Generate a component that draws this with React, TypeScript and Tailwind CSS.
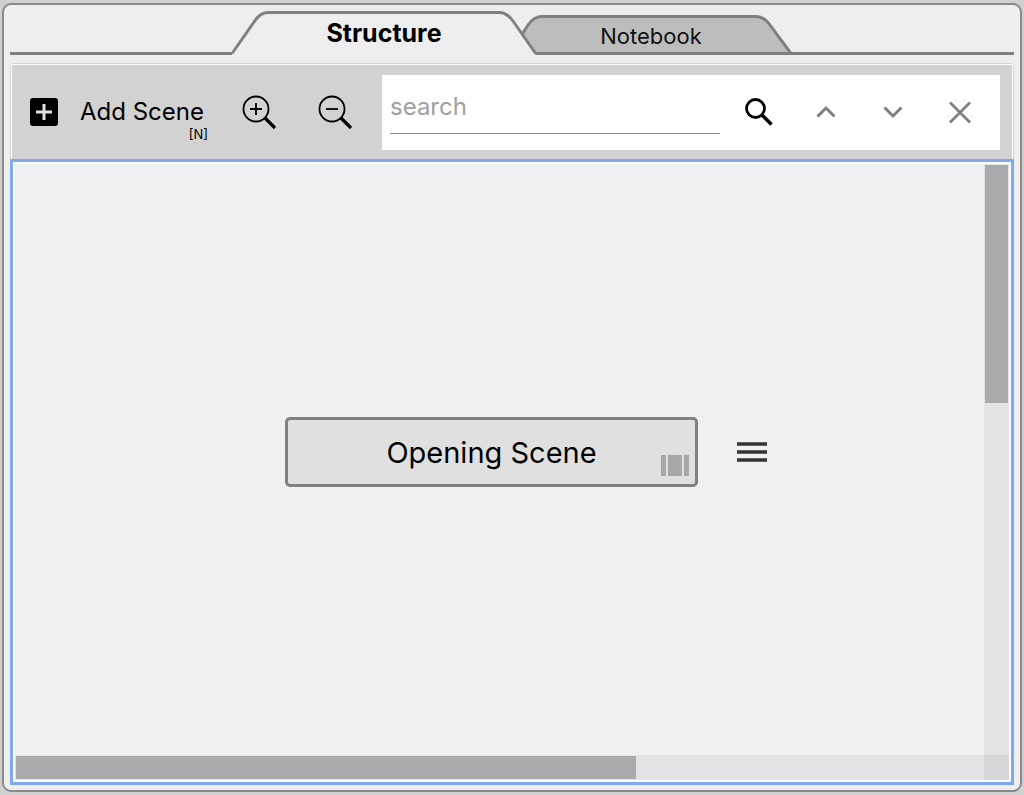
import { useState } from "react";

const tabs = ["Structure", "Notebook"];

const IconButton = ({ label, className, children }: { label: string; className: string; children: React.ReactNode }) => (
    <button type="button" aria-label={label} className={`flex shrink-0 items-center justify-center ${className}`}>
        <svg width="36" height="36" viewBox="0 0 36 36" fill="none" stroke="currentColor">
            {children}
        </svg>
    </button>
);

const TabBar = () => {
    const [active, setActive] = useState("Structure");

    return (
        <div role="tablist" className="flex h-[50px] items-end px-[6px]">
            <div className="h-[3px] flex-1 bg-[#808080]" />
            <button
                type="button"
                role="tab"
                aria-selected={active === tabs[0]}
                onClick={() => setActive(tabs[0])}
                className="relative z-10 h-[44px] w-[304px] text-[25px] leading-[44px] font-bold"
            >
                <svg className="absolute inset-0" width="304" height="44" viewBox="0 0 304 44" fill="none">
                    <path d="M0 42.5 L22 11 Q28 1.5 36 1.5 H267 Q275 1.5 281 10 L304 43 V44 H0 Z" fill="#eeeeee" />
                    <path d="M0 42.5 L22 11 Q28 1.5 36 1.5 H267 Q275 1.5 281 10 L304 43" stroke="#808080" strokeWidth="3" />
                </svg>
                <span className="relative">{tabs[0]}</span>
            </button>
            <button
                type="button"
                role="tab"
                aria-selected={active === tabs[1]}
                onClick={() => setActive(tabs[1])}
                className="relative -ml-[26px] h-[40px] w-[282px] text-[22px] leading-[42px] text-[#111111]"
            >
                <svg className="absolute inset-0" width="282" height="40" viewBox="0 0 282 40" fill="none">
                    <path d="M0 38.5 L18 10 Q24 1.5 32 1.5 H246 Q254 1.5 260 10 L281 38.5 Z" fill="#bdbdbd" stroke="#808080" strokeWidth="3" />
                </svg>
                <span className="relative">{tabs[1]}</span>
            </button>
            <div className="h-[3px] flex-1 bg-[#808080]" />
        </div>
    );
};

const Toolbar = () => {
    const [search, setSearch] = useState("");

    return (
        <div className="flex h-[94px] items-center bg-[#d2d2d2] pr-3">
            <button type="button" className="relative flex w-[209px] shrink-0 items-center pl-[18px] whitespace-nowrap">
                <svg width="28" height="28" viewBox="0 0 28 28" className="mr-[22px] shrink-0">
                    <rect width="28" height="28" rx="3" fill="#000" />
                    <path d="M14 6 V22 M6 14 H22" stroke="#e0e0e0" strokeWidth="3" />
                </svg>
                <span className="text-[24px] leading-7">Add Scene</span>
                <span className="absolute top-7 right-[13px] text-[13px] leading-4">[N]</span>
            </button>
            <IconButton label="Zoom in" className="w-[76px]">
                <circle cx="15" cy="15" r="12.5" strokeWidth="1.8" />
                <path d="M9 15 H21 M15 9 V21" strokeWidth="1.8" />
                <path d="M24 24 L34 34" strokeWidth="3.2" />
            </IconButton>
            <IconButton label="Zoom out" className="w-[76px]">
                <circle cx="15" cy="15" r="12.5" strokeWidth="1.8" />
                <path d="M9 15 H21" strokeWidth="1.8" />
                <path d="M24 24 L34 34" strokeWidth="3.2" />
            </IconButton>
            <div className="ml-[9px] flex h-[75px] min-w-0 flex-1 items-center bg-white pr-[7px] pl-2">
                <input
                    type="text"
                    aria-label="search"
                    placeholder="search"
                    value={search}
                    onChange={(e) => setSearch(e.target.value)}
                    className="mr-[5px] h-[44px] min-w-0 flex-1 border-b border-[#8c8c8c] pb-[11px] text-[24px] outline-none placeholder:text-[#a0a0a0]"
                />
                <IconButton label="Find" className="w-[67px]">
                    <circle cx="14.5" cy="14.5" r="9" strokeWidth="2.8" />
                    <path d="M21 21 L30.5 30.5" strokeWidth="3.5" />
                </IconButton>
                <IconButton label="Previous match" className="w-[67px] text-[#808080]">
                    <path d="M9.5 22.5 L18 14 L26.5 22.5" strokeWidth="3" />
                </IconButton>
                <IconButton label="Next match" className="w-[67px] text-[#808080]">
                    <path d="M9.5 13.5 L18 22 L26.5 13.5" strokeWidth="3" />
                </IconButton>
                <IconButton label="Close search" className="w-[67px] text-[#808080]">
                    <path d="M8 8.5 L28 28.5 M28 8.5 L8 28.5" strokeWidth="2.7" />
                </IconButton>
            </div>
        </div>
    );
};

const SceneNode = ({ title }: { title: string }) => (
    <div className="absolute top-[253px] left-[270px] flex items-center gap-[39px]">
        <button type="button" className="relative h-[70px] w-[413px] rounded-[5px] border-3 border-[#808080] bg-[#e0e0e0] pt-[2px] text-[29px]">
            {title}
            <svg className="absolute right-[6px] bottom-2" width="28" height="21" viewBox="0 0 28 21" fill="#a8a8a8">
                <path d="M0 0 H5 V21 H0 Z M7 0 H21 V21 H7 Z M23 0 H28 V21 H23 Z" />
            </svg>
        </button>
        <button type="button" aria-label="Scene menu">
            <svg width="30" height="20" viewBox="0 0 30 20" stroke="#333436" strokeWidth="3.6">
                <path d="M0 2 H30 M0 10 H30 M0 18 H30" />
            </svg>
        </button>
    </div>
);

const App = () => {
    return (
        <div className="flex min-h-screen flex-col bg-[#d0d0d0] px-[2px] pt-[3px] pb-[3px] font-['Inter','Liberation_Sans',sans-serif] text-black">
            <div className="flex flex-1 flex-col rounded-[9px] border-2 border-[#8a8a8a] bg-[#eeeeee] pb-[5px]">
                <TabBar />
                <div className="mx-[6px] mt-2 flex flex-1 flex-col">
                    <div className="rounded-t-[5px] border border-b-0 border-[#d4d4d4]">
                        <div className="border border-b-0 border-white">
                            <Toolbar />
                        </div>
                    </div>
                    <div className="flex flex-1 flex-col border-3 border-[#83a9ea] bg-[#f9fcfd] p-[2px]">
                        <div className="flex flex-1">
                            <div className="relative flex-1 overflow-hidden bg-[#eff0f2]">
                                <SceneNode title="Opening Scene" />
                            </div>
                            <div className="w-[25px] bg-[#e2e3e4] px-px pt-px">
                                <div className="h-[238px] bg-[#a9aaab]" />
                            </div>
                        </div>
                        <div className="flex h-[25px]">
                            <div className="flex-1 bg-[#e2e3e4] py-px pl-px">
                                <div className="h-[23px] w-[64%] bg-[#a9aaab]" />
                            </div>
                            <div className="w-[25px] bg-[#d6d7d8]" />
                        </div>
                    </div>
                </div>
            </div>
        </div>
    );
};

export default App;
